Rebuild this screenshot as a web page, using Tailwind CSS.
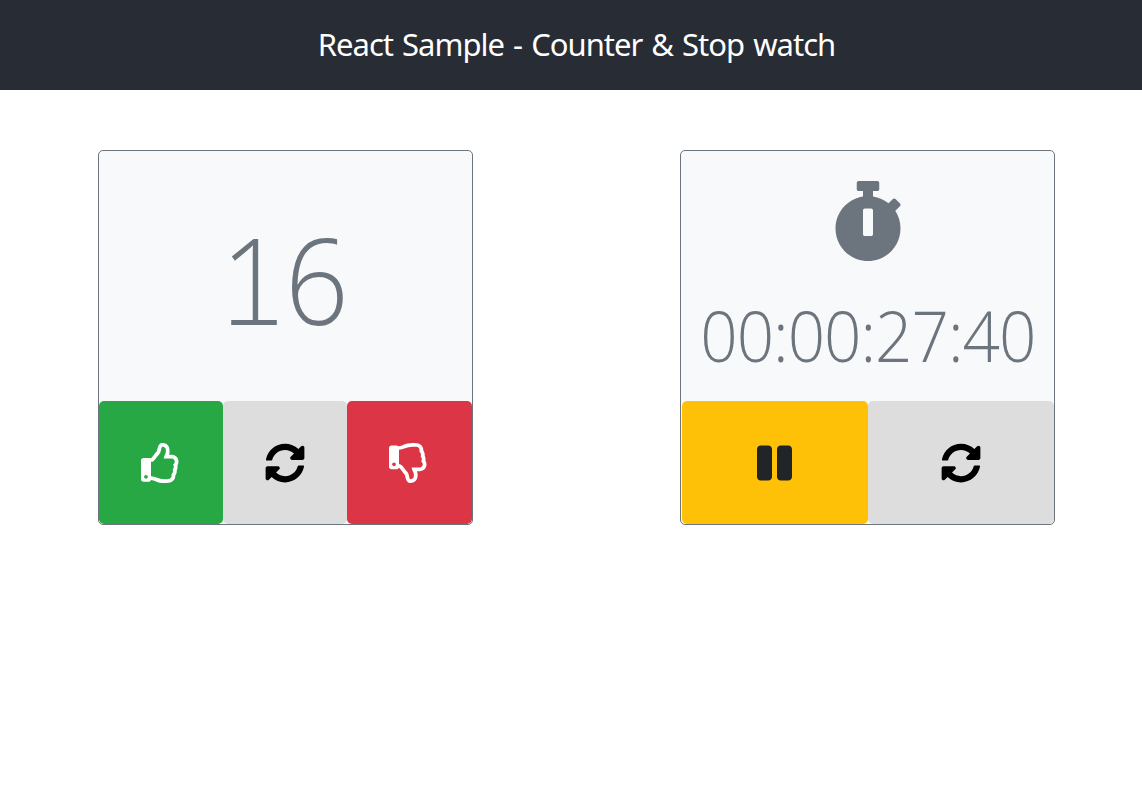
<!DOCTYPE html>
<html lang="en">
<head>
<meta charset="utf-8">
<title>React Sample</title>
<script src="https://cdn.jsdelivr.net/npm/@tailwindcss/browser@4"></script>
</head>
<body class="bg-white font-['Open_Sans',sans-serif]">
<header class="flex h-[90px] items-center justify-center bg-[#282c34] pb-px pl-[11px] text-white">
  <h1 class="font-['Noto_Sans','Open_Sans',sans-serif] text-[31px] leading-none tracking-[-1px] [word-spacing:2px] whitespace-nowrap">React Sample - Counter &amp; Stop watch</h1>
</header>
<main class="flex gap-[207px] pt-[60px] pl-[98px]">
  <section class="flex h-[375px] w-[375px] shrink-0 flex-col overflow-hidden rounded-[5px] border border-[#6c757d] bg-[#f8f9fa]">
    <div class="flex h-[250px] items-center justify-center pt-[6px] pr-[2px] text-[120px] leading-none font-light tracking-[-5px] text-[#6c757d]">
      <span class="relative origin-left scale-x-[.93]">1<span class="absolute bottom-[14px] left-[11px] h-[5px] w-[49px] bg-[#6c757d]"></span></span><span class="origin-left scale-x-[.93]">6</span>
    </div>
    <div class="grid flex-1 grid-cols-[124px_124px_125px]">
      <button class="flex items-center justify-center rounded-[5px] bg-[#28a745] pr-px text-white">
        <svg class="size-10" viewBox="0 0 512 512" fill="currentColor"><path d="M466.27 286.69C475.04 271.84 480 256 480 236.85c0-44.015-37.218-85.58-85.82-85.58H357.7c4.92-12.81 8.85-28.13 8.85-46.54C366.55 31.936 328.86 0 271.28 0c-61.607 0-58.093 94.933-71.76 108.6-22.747 22.747-49.615 66.447-68.76 83.4H32c-17.673 0-32 14.327-32 32v240c0 17.673 14.327 32 32 32h64c14.893 0 27.408-10.174 30.978-23.95 44.509 1.001 75.06 39.94 177.802 39.94 7.22 0 15.22.01 22.22.01 77.117 0 111.986-39.423 112.94-95.33 13.319-18.425 20.299-43.122 17.34-66.99 9.854-18.452 13.664-40.343 8.99-62.99zm-61.75 53.83c12.56 21.13 1.26 49.41-13.94 57.57 7.7 48.78-17.608 65.9-53.12 65.9h-37.82c-71.639 0-118.029-37.82-171.64-37.82V240h10.92c28.36 0 67.98-70.89 94.54-97.46 28.36-28.36 18.91-75.63 37.82-94.54 47.27 0 47.27 32.98 47.27 56.73 0 39.17-28.36 56.72-28.36 94.54h103.99c21.11 0 37.73 18.91 37.82 37.82.09 18.9-12.82 37.81-22.27 37.81 13.489 14.555 16.371 45.236-5.21 65.62zM88 432c0 13.255-10.745 24-24 24s-24-10.745-24-24 10.745-24 24-24 24 10.745 24 24z"/></svg>
      </button>
      <button class="flex items-center justify-center rounded-[5px] bg-[#ddd] text-black">
        <svg class="size-10" viewBox="0 0 512 512" fill="currentColor"><path d="M370.72 133.28C339.458 104.008 298.888 87.962 255.848 88c-77.458.068-144.328 53.178-162.791 126.85-1.344 5.363-6.122 9.15-11.651 9.15H24.103c-7.498 0-13.194-6.807-11.807-14.176C33.933 94.924 134.813 8 256 8c66.448 0 126.791 26.136 171.315 68.685L463.03 40.97C478.149 25.851 504 36.559 504 57.941V192c0 13.255-10.745 24-24 24H345.941c-21.382 0-32.09-25.851-16.971-40.971l41.75-41.749zM32 296h134.059c21.382 0 32.09 25.851 16.971 40.971l-41.75 41.75c31.262 29.273 71.835 45.319 114.876 45.28 77.418-.07 144.315-53.144 162.787-126.849 1.344-5.363 6.122-9.15 11.651-9.15h57.304c7.498 0 13.194 6.807 11.807 14.176C478.067 417.076 377.187 504 256 504c-66.448 0-126.791-26.136-171.315-68.685L48.97 471.03C33.851 486.149 8 475.441 8 454.059V320c0-13.255 10.745-24 24-24z"/></svg>
      </button>
      <button class="flex items-center justify-center rounded-[5px] bg-[#dc3545] pr-px text-white">
        <svg class="size-10" viewBox="0 0 512 512" fill="currentColor"><path d="M466.27 225.31c4.674-22.647.864-44.538-8.99-62.99 2.958-23.868-4.021-48.565-17.34-66.99C438.986 39.423 404.117 0 327 0c-7 0-15 .01-22.22.01C201.195.01 168.997 40 128 40h-10.845c-5.64-4.975-13.042-8-21.155-8H32C14.327 32 0 46.327 0 64v240c0 17.673 14.327 32 32 32h64c11.842 0 22.175-6.438 27.708-16h7.052c19.146 16.953 46.013 60.653 68.76 83.4 13.667 13.667 10.153 108.6 71.76 108.6 57.58 0 95.27-31.936 95.27-104.73 0-18.41-3.93-33.73-8.85-46.54h36.48c48.602 0 85.82-41.565 85.82-85.58 0-19.15-4.96-34.99-13.73-49.84zM64 296c-13.255 0-24-10.745-24-24s10.745-24 24-24 24 10.745 24 24-10.745 24-24 24zm330.18 16.73H290.19c0 37.82 28.36 55.37 28.36 94.54 0 23.75 0 56.73-47.27 56.73-18.91-18.91-9.46-66.18-37.82-94.54C206.9 342.89 167.28 272 138.92 272H128V85.83c53.611 0 100.001-37.82 171.64-37.82h37.82c35.512 0 60.82 17.12 53.12 65.9 15.2 8.16 26.5 36.44 13.94 57.57 21.581 20.384 18.699 51.065 5.21 65.62 9.45 0 22.36 18.91 22.27 37.81-.09 18.91-16.71 37.82-37.82 37.82z"/></svg>
      </button>
    </div>
  </section>
  <section class="flex h-[375px] w-[375px] shrink-0 flex-col overflow-hidden rounded-[5px] border border-[#6c757d] bg-[#f8f9fa]">
    <div class="flex h-[250px] flex-col items-center pt-[30px] text-[#6c757d]">
      <svg class="h-20 w-[70px]" viewBox="0 0 448 512" fill="currentColor"><path d="M432 304c0 114.9-93.1 208-208 208S16 418.9 16 304c0-104 76.3-190.2 176-205.5V64h-28c-6.6 0-12-5.4-12-12V12c0-6.6 5.4-12 12-12h120c6.6 0 12 5.4 12 12v40c0 6.6-5.4 12-12 12h-28v34.5c37.5 5.8 71.7 21.6 99.7 44.6l27.5-27.5c4.7-4.7 12.3-4.7 17 0l28.3 28.3c4.7 4.7 4.7 12.3 0 17l-29.4 29.4-.6.6C419.7 223.3 432 262.2 432 304zm-176 36V188.5c0-6.6-5.4-12-12-12h-40c-6.6 0-12 5.4-12 12V340c0 6.6 5.4 12 12 12h40c6.6 0 12-5.4 12-12z"/></svg>
      <div class="mt-[39px] scale-x-[.937] text-[70px] leading-none font-light tracking-[-1.1px] whitespace-nowrap">00:00:27:40</div>
    </div>
    <div class="grid flex-1 grid-cols-2 pl-px">
      <button class="flex items-center justify-center rounded-[5px] bg-[#ffc107] pr-px text-[#212529]">
        <svg class="h-10 w-[35px]" viewBox="0 0 448 512" fill="currentColor"><path d="M144 479H48c-26.5 0-48-21.5-48-48V79c0-26.5 21.5-48 48-48h96c26.5 0 48 21.5 48 48v352c0 26.5-21.5 48-48 48zm304-48V79c0-26.5-21.5-48-48-48h-96c-26.5 0-48 21.5-48 48v352c0 26.5 21.5 48 48 48h96c26.5 0 48-21.5 48-48z"/></svg>
      </button>
      <button class="flex items-center justify-center rounded-[5px] bg-[#ddd] text-black">
        <svg class="size-10" viewBox="0 0 512 512" fill="currentColor"><path d="M370.72 133.28C339.458 104.008 298.888 87.962 255.848 88c-77.458.068-144.328 53.178-162.791 126.85-1.344 5.363-6.122 9.15-11.651 9.15H24.103c-7.498 0-13.194-6.807-11.807-14.176C33.933 94.924 134.813 8 256 8c66.448 0 126.791 26.136 171.315 68.685L463.03 40.97C478.149 25.851 504 36.559 504 57.941V192c0 13.255-10.745 24-24 24H345.941c-21.382 0-32.09-25.851-16.971-40.971l41.75-41.749zM32 296h134.059c21.382 0 32.09 25.851 16.971 40.971l-41.75 41.75c31.262 29.273 71.835 45.319 114.876 45.28 77.418-.07 144.315-53.144 162.787-126.849 1.344-5.363 6.122-9.15 11.651-9.15h57.304c7.498 0 13.194 6.807 11.807 14.176C478.067 417.076 377.187 504 256 504c-66.448 0-126.791-26.136-171.315-68.685L48.97 471.03C33.851 486.149 8 475.441 8 454.059V320c0-13.255 10.745-24 24-24z"/></svg>
      </button>
    </div>
  </section>
</main>
</body>
</html>
